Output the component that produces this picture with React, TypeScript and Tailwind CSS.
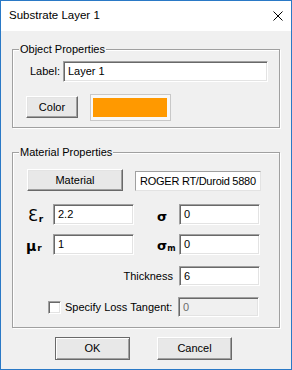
import React from "react";

const sunken =
  "border border-t-[#a0a0a0] border-l-[#a0a0a0] border-r-white border-b-white shadow-[inset_1px_1px_0_#696969,inset_-1px_-1px_0_#e3e3e3]";
const raised =
  "border border-t-white border-l-white border-r-[#696969] border-b-[#696969] shadow-[inset_-1px_-1px_0_#a0a0a0,inset_1px_1px_0_#e3e3e3] bg-[#e8e8e8]";

function Field({ value, className = "", disabled = false }: { value: string; className?: string; disabled?: boolean }) {
  return (
    <div
      className={`${sunken} ${disabled ? "bg-[#f0f0f0] text-[#6d6d6d]" : "bg-white text-black"} flex items-center pl-[4px] whitespace-nowrap ${className}`}
    >
      {value}
    </div>
  );
}

function Button({ label, className = "" }: { label: string; className?: string }) {
  return <div className={`${raised} flex items-center justify-center ${className}`}>{label}</div>;
}

export default function App() {
  return (
    <div className="w-[292px] h-[370px] border border-[#2a79c6] bg-[#f0f0f0] flex flex-col text-[11px] leading-none text-black font-['Liberation_Sans',Arial,sans-serif]">
      {/* Title bar */}
      <div className="h-[30px] bg-white flex items-center justify-between pl-[8px] pr-[8px]">
        <span className="text-[11.5px]">Substrate Layer 1</span>
        <svg width="10" height="10" viewBox="0 0 10 10">
          <path d="M0.5 0.5 L9.5 9.5 M9.5 0.5 L0.5 9.5" stroke="#000" strokeWidth="1" />
        </svg>
      </div>

      {/* Body */}
      <div className="flex-1 flex flex-col px-[11px] pt-[18px]">
        {/* Object Properties */}
        <div className="relative h-[79px] border border-[#a0a0a0] shadow-[inset_1px_1px_0_#fff,1px_1px_0_#fff] flex flex-col">
          <span className="absolute left-[6px] -top-[8px] px-[1px] bg-[#f0f0f0] leading-[14px]">Object Properties</span>
          <div className="flex items-center mt-[11px] h-[21px]">
            <span className="ml-[17px] w-[33px]">Label:</span>
            <Field value="Layer 1" className="w-[205px] h-[21px]" />
          </div>
          <div className="flex items-start mt-[12px]">
            <Button label="Color" className="ml-[13px] mt-[2px] w-[52px] h-[22px]" />
            <div className="ml-[12px] w-[81px] h-[27px] border border-[#c8c8c8] bg-[#f8f8f8] pl-[2px] pt-[3px]">
              <div className="w-[74px] h-[19px] bg-[#ff9900]" />
            </div>
          </div>
        </div>

        {/* Material Properties */}
        <div className="relative mt-[24px] h-[176px] border border-[#a0a0a0] shadow-[inset_1px_1px_0_#fff,1px_1px_0_#fff] flex flex-col">
          <span className="absolute left-[6px] -top-[8px] px-[1px] bg-[#f0f0f0] leading-[14px]">Material Properties</span>

          <div className="flex items-start mt-[16px] h-[23px]">
            <Button label="Material" className="ml-[14px] w-[96px] h-[22px]" />
            <div className="ml-[12px] mt-[2px] w-[126px] h-[20px] bg-white border border-t-[#a0a0a0] border-l-[#a0a0a0] border-r-[#e3e3e3] border-b-[#e3e3e3] flex items-center pl-[4px] whitespace-nowrap overflow-hidden tracking-[-0.25px]">
              ROGER RT/Duroid 5880
            </div>
          </div>

          <div className="flex items-center mt-[12px] h-[21px]">
            <div className="w-[40px] h-full flex items-center pl-[15px]">
              <span className="font-['DejaVu_Sans',sans-serif] text-[16px] leading-none relative top-[1px]">Ɛ</span>
              <span className="font-['DejaVu_Sans',sans-serif] font-bold text-[9px] leading-none relative top-[5px] ml-[1px]">r</span>
            </div>
            <Field value="2.2" className="w-[81px] h-[21px]" />
            <div className="w-[45px] h-full flex items-center pl-[23px]">
              <span className="font-['DejaVu_Sans',sans-serif] font-bold text-[13px] leading-none relative top-[2px]">σ</span>
            </div>
            <Field value="0" className="w-[81px] h-[21px]" />
          </div>

          <div className="flex items-center mt-[9px] h-[21px]">
            <div className="w-[40px] h-full flex items-center pl-[13px]">
              <span className="font-['DejaVu_Sans',sans-serif] font-bold text-[14px] leading-none relative top-[1px]">μ</span>
              <span className="font-['DejaVu_Sans',sans-serif] font-bold text-[9px] leading-none relative top-[4px] ml-[1px]">r</span>
            </div>
            <Field value="1" className="w-[81px] h-[21px]" />
            <div className="w-[45px] h-full flex items-center pl-[23px]">
              <span className="font-['DejaVu_Sans',sans-serif] font-bold text-[13px] leading-none relative top-[1px]">σ</span>
              <span className="font-['DejaVu_Sans',sans-serif] font-bold text-[8px] leading-none relative top-[4px]">m</span>
            </div>
            <Field value="0" className="w-[81px] h-[21px]" />
          </div>

          <div className="flex items-center mt-[11px] h-[20px]">
            <span className="w-[166px] text-right pr-[6px]">Thickness</span>
            <Field value="6" className="w-[81px] h-[20px]" />
          </div>

          <div className="flex items-center mt-[11px] h-[20px]">
            <div className={`ml-[35px] w-[13px] h-[13px] bg-white ${sunken}`} />
            <span className="ml-[4px] w-[113px] whitespace-nowrap">Specify Loss Tangent:</span>
            <Field value="0" disabled className="w-[81px] h-[20px]" />
          </div>
        </div>

        {/* Buttons */}
        <div className="flex mt-[9px]">
          <div className="ml-[43px] w-[75px] h-[23px] border border-[#696969] bg-[#e8e8e8] shadow-[inset_1px_1px_0_#fff,inset_-1px_-1px_0_#a0a0a0] flex items-center justify-center">
            OK
          </div>
          <Button label="Cancel" className="ml-[27px] w-[75px] h-[23px]" />
        </div>
      </div>
    </div>
  );
}
